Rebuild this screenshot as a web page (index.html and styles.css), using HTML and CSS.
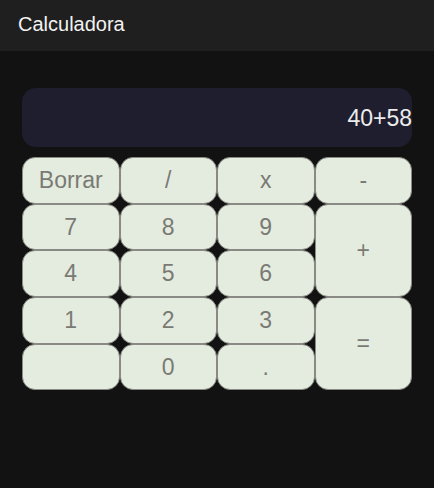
FILE: index.html
```html
<!DOCTYPE html>
<html lang="es">
<head>
<meta charset="utf-8">
<title>Calculadora</title>
<link rel="stylesheet" href="styles.css">
</head>
<body>
<header class="topbar"><span class="title">Calculadora</span></header>
<main class="calc">
  <div class="display"><span class="expr">40+58</span></div>
  <div class="keys">
    <button class="key">Borrar</button>
    <button class="key">/</button>
    <button class="key">x</button>
    <button class="key">-</button>
    <button class="key">7</button>
    <button class="key">8</button>
    <button class="key">9</button>
    <button class="key tall">+</button>
    <button class="key">4</button>
    <button class="key">5</button>
    <button class="key">6</button>
    <button class="key">1</button>
    <button class="key">2</button>
    <button class="key">3</button>
    <button class="key tall">=</button>
    <button class="key"></button>
    <button class="key">0</button>
    <button class="key">.</button>
  </div>
</main>
</body>
</html>
```
FILE: styles.css
```css
html, body {
  margin: 0;
  padding: 0;
  background: #121212;
  height: 100%;
}
body {
  font-family: "Liberation Sans", Arial, sans-serif;
}
.topbar {
  height: 51px;
  background: #1f1f1f;
  display: flex;
  align-items: center;
  padding-left: 18px;
  box-sizing: border-box;
}
.title {
  color: #f2f2f2;
  font-size: 20px;
  line-height: 24px;
  margin-top: -4px;
}
.calc {
  padding: 37px 22px 0 22px;
}
.display {
  height: 59px;
  background: #1f1e2e;
  border-radius: 14px;
  display: flex;
  align-items: center;
  justify-content: flex-end;
}
.expr {
  color: #ececec;
  font-size: 23px;
  line-height: 28px;
}
.keys {
  margin-top: 10px;
  display: grid;
  grid-template-columns: repeat(4, 1fr);
  grid-template-rows: repeat(5, 46.7px);
}
.key {
  margin: 0;
  padding: 0;
  background: #e4ecdf;
  border: 1px solid #8a8a85;
  border-radius: 13px;
  color: #7a7a74;
  font-family: "Liberation Sans", Arial, sans-serif;
  font-size: 23px;
  line-height: 1;
}
.tall {
  grid-row: span 2;
}
```
